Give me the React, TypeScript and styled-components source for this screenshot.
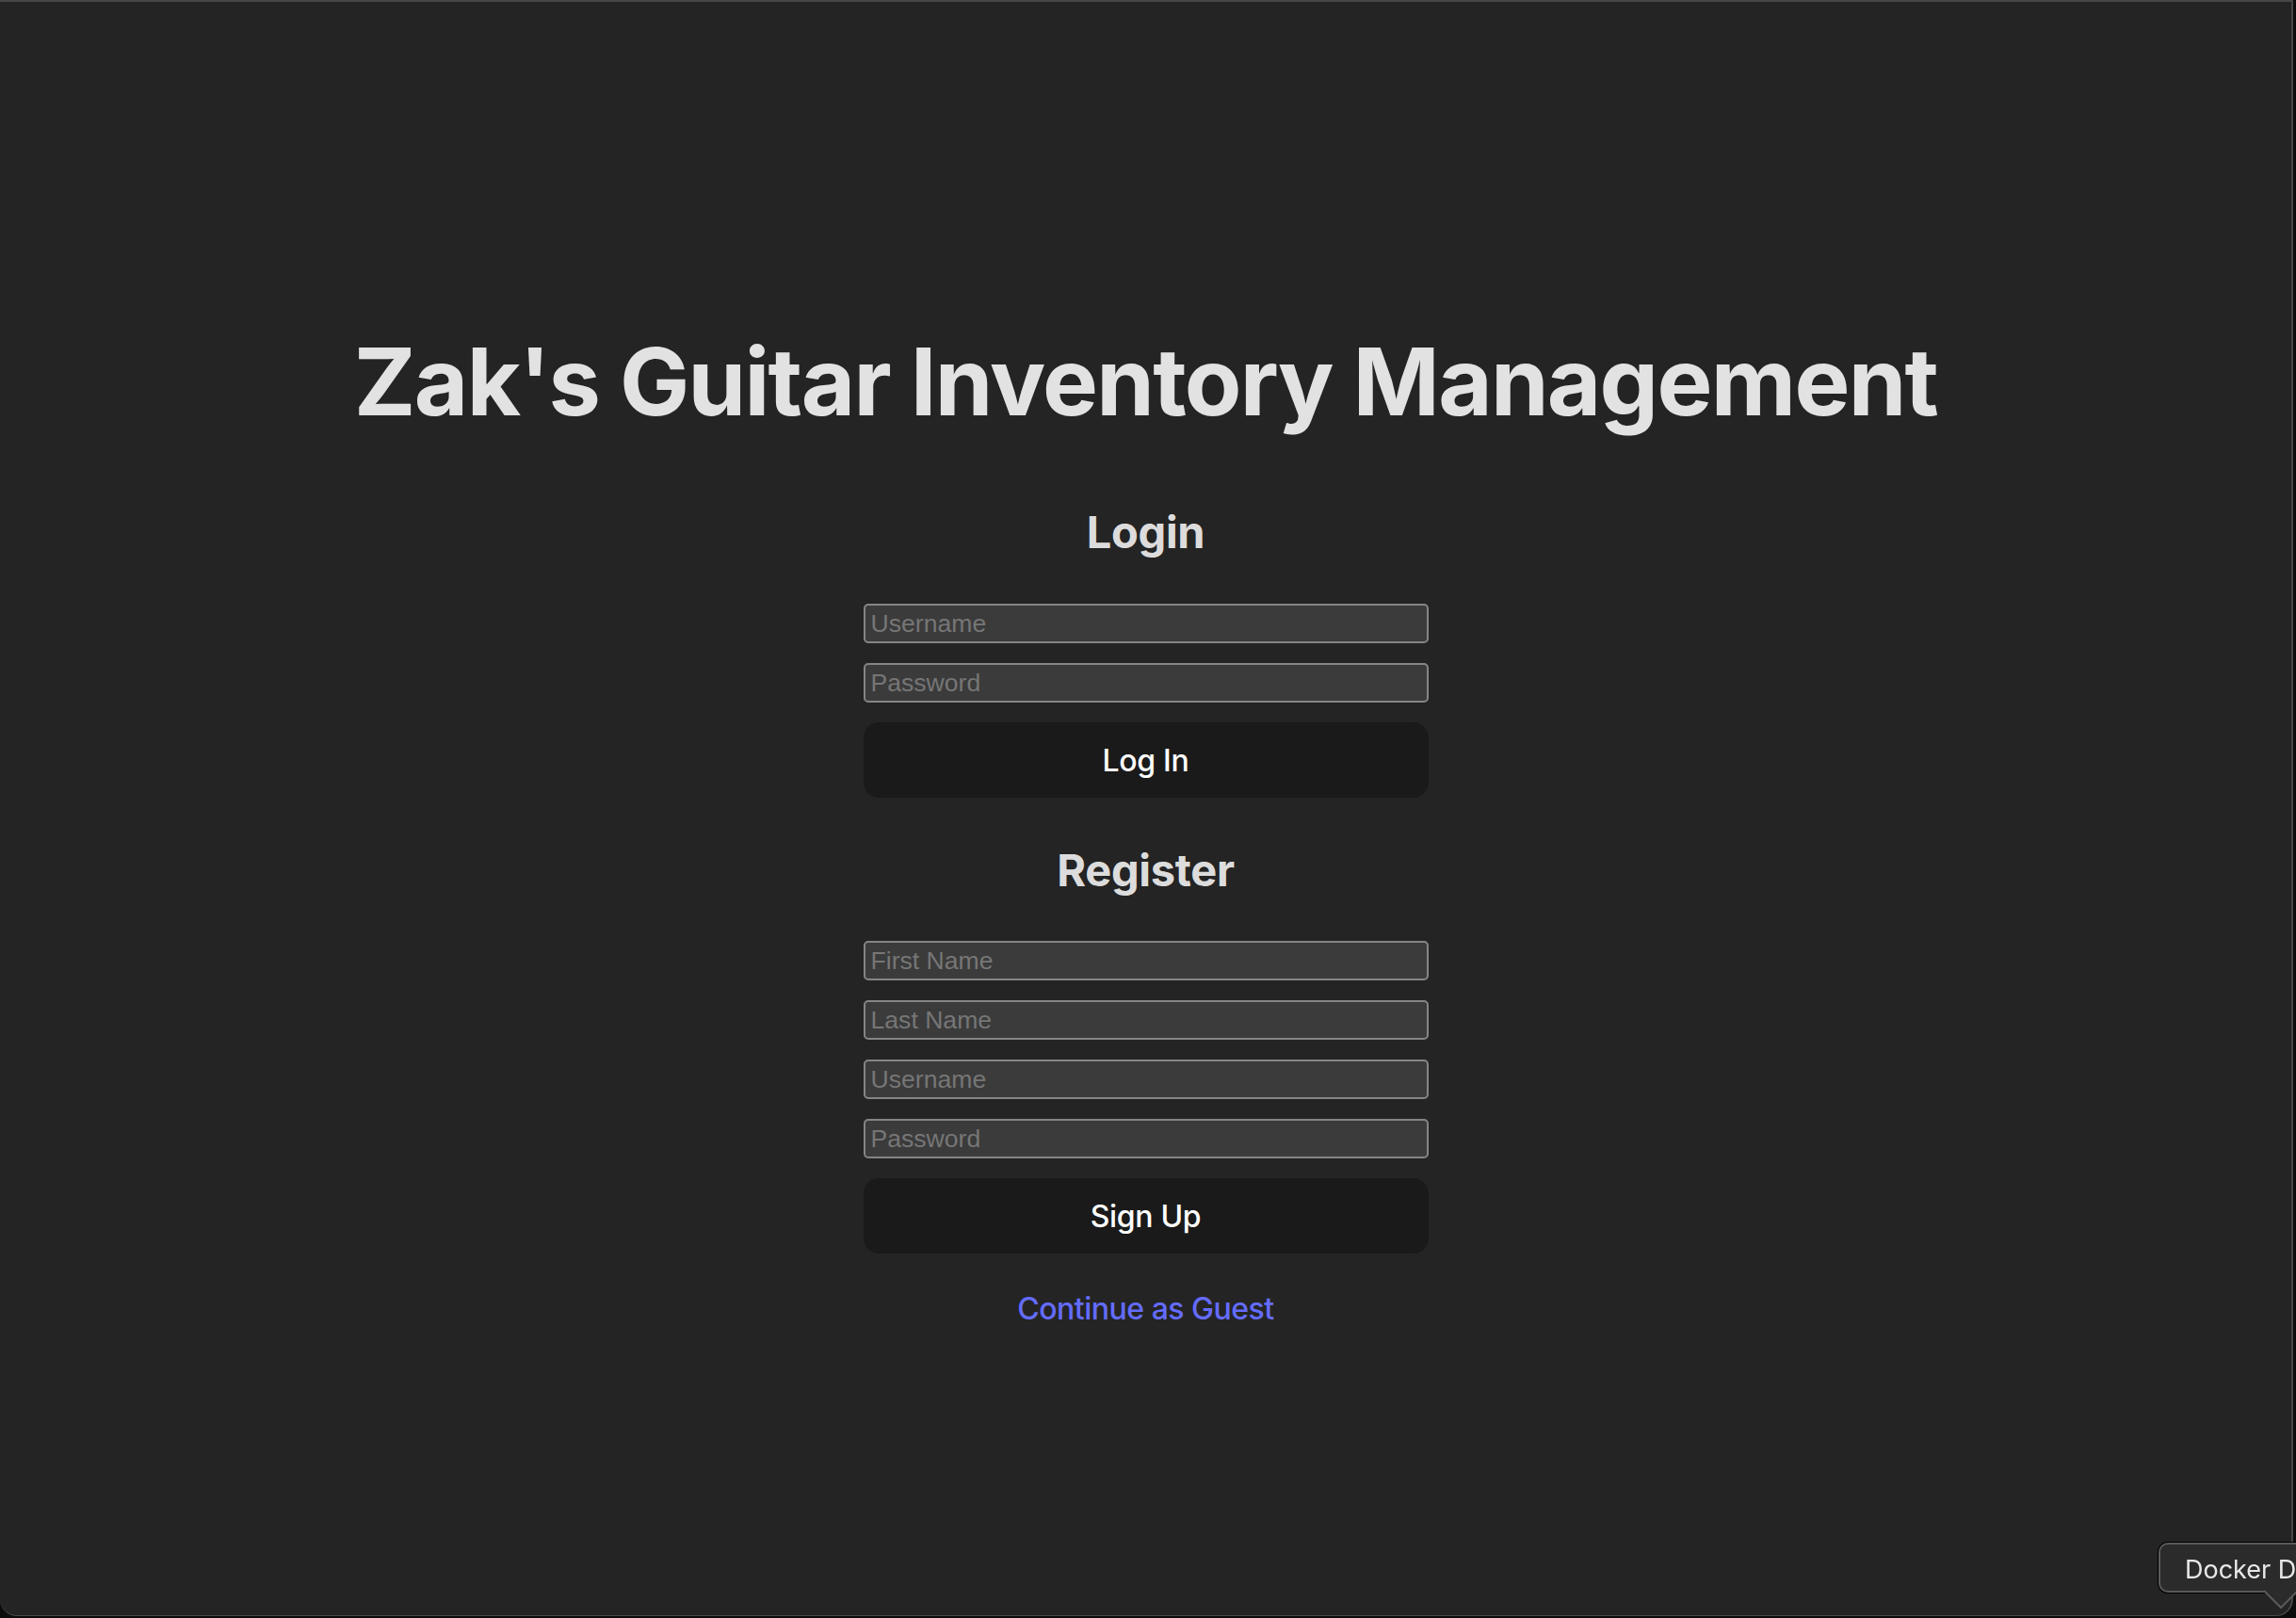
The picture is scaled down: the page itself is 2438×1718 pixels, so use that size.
import React from "react";
import styled, { createGlobalStyle } from "styled-components";

const Global = createGlobalStyle`
  html, body {
    margin: 0;
    padding: 0;
    background: #0c0c0c;
    overflow: hidden;
    width: 100vw;
    height: 100vh;
  }
  * { box-sizing: border-box; }
`;

const Window = styled.div`
  position: relative;
  width: 2435px;
  height: 1716px;
  background: #242424;
  border-top: 2px solid #464646;
  border-right: 2px solid #474747;
  border-bottom: 1px solid #4a4a4a;
  border-bottom-left-radius: 18px;
  border-bottom-right-radius: 18px;
  display: flex;
  flex-direction: column;
  align-items: center;
  padding-top: 348px;
  font-family: Inter, "Noto Sans", sans-serif;
  color: rgba(255, 255, 255, 0.87);
`;

const Title = styled.h1`
  margin: 0;
  font-size: 99px;
  line-height: 110px;
  font-weight: 700;
  letter-spacing: -1.7px;
  color: rgba(255, 255, 255, 0.87);
`;

const SectionTitle = styled.h2<{ $gap: number }>`
  margin: ${(p) => p.$gap}px 0 0;
  font-size: 47px;
  line-height: 58px;
  font-weight: 700;
  letter-spacing: -0.3px;
  color: rgba(255, 255, 255, 0.87);
`;

const Form = styled.form<{ $gap: number }>`
  margin-top: ${(p) => p.$gap}px;
  width: 600px;
  display: flex;
  flex-direction: column;
  gap: 21px;
`;

const Field = styled.input`
  width: 100%;
  height: 42px;
  margin: 0;
  padding: 2px 6px;
  background: #3b3b3b;
  border: 2px solid #858585;
  border-radius: 5px;
  font-family: "Liberation Sans", Arial, sans-serif;
  font-size: 26.6px;
  color: #e0e0e0;
  outline: none;
  &::placeholder {
    color: #767676;
  }
`;

const Button = styled.button`
  width: 100%;
  height: 80px;
  margin: 0;
  border: 2px solid transparent;
  border-radius: 16px;
  background: #1a1a1a;
  font-family: Inter, "Noto Sans", sans-serif;
  font-size: 32px;
  font-weight: 500;
  letter-spacing: -0.3px;
  color: #ffffff;
  cursor: pointer;
`;

const GuestLink = styled.a`
  margin-top: 35px;
  font-size: 32px;
  line-height: 48px;
  font-weight: 500;
  letter-spacing: -0.5px;
  color: #646cff;
  text-decoration: none;
  cursor: pointer;
`;

const Tooltip = styled.div`
  position: fixed;
  left: 2292px;
  top: 1638px;
  width: 200px;
  height: 53px;
  background: #2b2b2b;
  border: 2px solid #5a5a5a;
  box-shadow: 0 0 0 1px #000;
  border-radius: 10px;
  padding: 4px 0 0 26px;
  display: flex;
  align-items: center;
  font-family: Inter, "Noto Sans", sans-serif;
  font-size: 27px;
  color: #e8e8e8;
  white-space: nowrap;
`;

const TooltipTail = styled.svg`
  position: fixed;
  left: 2402px;
  top: 1688px;
`;

export default function App() {
  return (
    <>
      <Global />
      <Window>
        <Title>Zak's Guitar Inventory Management</Title>
        <SectionTitle $gap={76}>Login</SectionTitle>
        <Form $gap={47} onSubmit={(e) => e.preventDefault()}>
          <Field placeholder="Username" />
          <Field type="password" placeholder="Password" />
          <Button type="submit">Log In</Button>
        </Form>
        <SectionTitle $gap={48}>Register</SectionTitle>
        <Form $gap={46} onSubmit={(e) => e.preventDefault()}>
          <Field placeholder="First Name" />
          <Field placeholder="Last Name" />
          <Field placeholder="Username" />
          <Field type="password" placeholder="Password" />
          <Button type="submit">Sign Up</Button>
        </Form>
        <GuestLink>Continue as Guest</GuestLink>
      </Window>
      <Tooltip>Docker Desktop</Tooltip>
      <TooltipTail width="40" height="22" viewBox="0 0 40 22">
        <path d="M2 1 L20 19 L38 1" fill="#2b2b2b" stroke="#5a5a5a" strokeWidth="2" />
      </TooltipTail>
    </>
  );
}
